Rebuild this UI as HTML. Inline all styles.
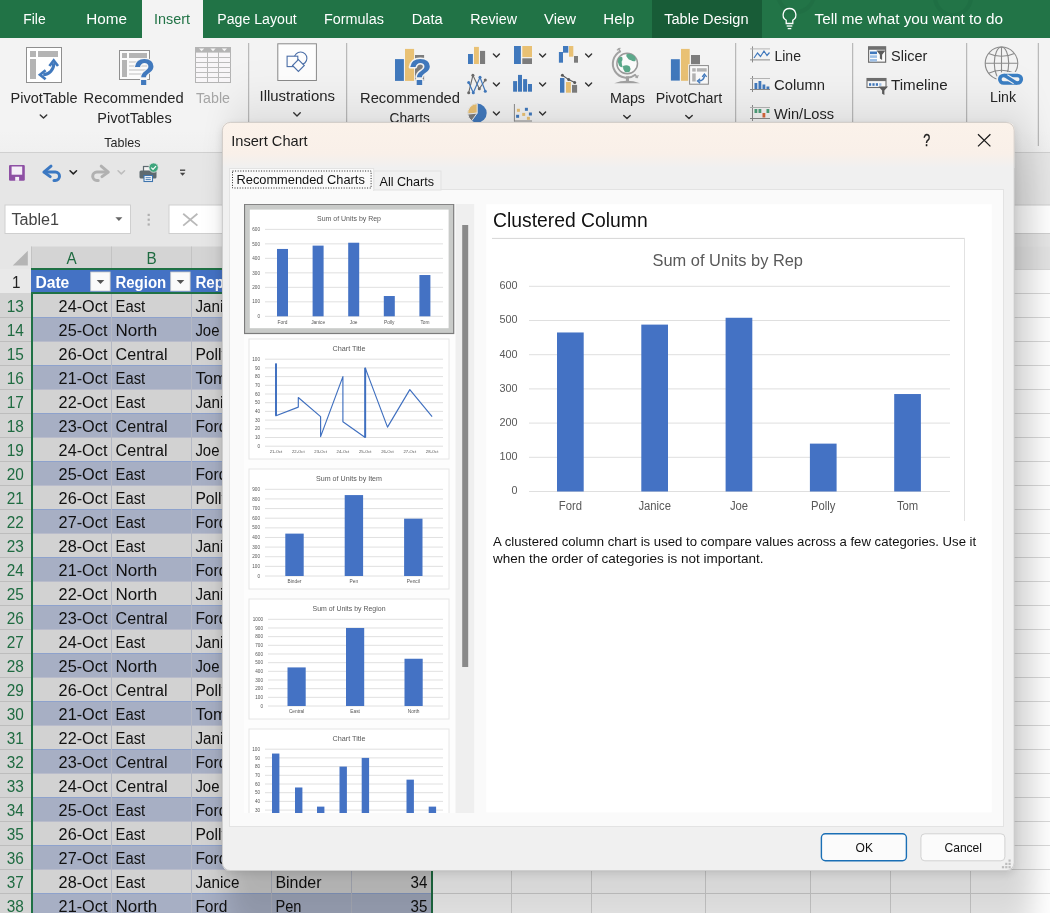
<!DOCTYPE html>
<html><head><meta charset="utf-8"><title>Insert Chart</title>
<style>
html,body{margin:0;padding:0;background:#e6e6e6;overflow:hidden}
svg{display:block;opacity:0.999}
text{font-family:"Liberation Sans",sans-serif;white-space:pre}
</style></head><body>
<svg width="1050" height="913" viewBox="0 0 1050 913">
<defs>
<linearGradient id="ribg" x1="0" y1="0" x2="0" y2="1"><stop offset="0" stop-color="#f3f3f3"/><stop offset="0.8" stop-color="#f3f3f3"/><stop offset="1" stop-color="#f0f0f0"/></linearGradient>
<linearGradient id="dlgtitle" x1="0" y1="0" x2="0" y2="1"><stop offset="0" stop-color="#fbf2ea"/><stop offset="0.68" stop-color="#f9f0e9"/><stop offset="1" stop-color="#f0f0f0"/></linearGradient>
<filter id="shadow" x="-30%" y="-30%" width="160%" height="160%"><feGaussianBlur stdDeviation="14 36"/></filter>
<filter id="shadow2" x="-10%" y="-10%" width="120%" height="120%"><feGaussianBlur stdDeviation="4"/></filter>
<clipPath id="dlgclip"><rect x="222" y="122" width="792.6" height="749" rx="8" ry="8"/></clipPath>
<clipPath id="listclip"><rect x="244" y="204" width="211" height="609"/></clipPath>
</defs>
<rect x="0" y="0" width="1050" height="38" fill="#217346" />
<rect x="652" y="0" width="110" height="38" fill="#185c37" />
<rect x="762" y="0" width="288" height="38" fill="#227447" />
<circle cx="796" cy="-6" r="18" fill="none" stroke="#1d6a40" stroke-width="4" opacity="0.4"/>
<circle cx="953" cy="-3" r="18" fill="none" stroke="#1d6a40" stroke-width="4" opacity="0.45"/>
<rect x="142" y="0" width="61" height="38" fill="#f3f3f3" />
<text x="23.3" y="24.3" font-size="15.5" fill="#ffffff" textLength="22.4" lengthAdjust="spacingAndGlyphs" >File</text>
<text x="86.3" y="24.3" font-size="15.5" fill="#ffffff" textLength="40.7" lengthAdjust="spacingAndGlyphs" >Home</text>
<text x="154.0" y="24.3" font-size="15.5" fill="#217346" textLength="36.0" lengthAdjust="spacingAndGlyphs" >Insert</text>
<text x="217.3" y="24.3" font-size="15.5" fill="#ffffff" textLength="79.4" lengthAdjust="spacingAndGlyphs" >Page Layout</text>
<text x="324.0" y="24.3" font-size="15.5" fill="#ffffff" textLength="60.0" lengthAdjust="spacingAndGlyphs" >Formulas</text>
<text x="411.7" y="24.3" font-size="15.5" fill="#ffffff" textLength="31.0" lengthAdjust="spacingAndGlyphs" >Data</text>
<text x="470.3" y="24.3" font-size="15.5" fill="#ffffff" textLength="46.7" lengthAdjust="spacingAndGlyphs" >Review</text>
<text x="544.0" y="24.3" font-size="15.5" fill="#ffffff" textLength="32.0" lengthAdjust="spacingAndGlyphs" >View</text>
<text x="603.3" y="24.3" font-size="15.5" fill="#ffffff" textLength="31.0" lengthAdjust="spacingAndGlyphs" >Help</text>
<text x="664.2" y="24.3" font-size="15.5" fill="#ffffff" textLength="84.3" lengthAdjust="spacingAndGlyphs" >Table Design</text>
<text x="814.5" y="24.3" font-size="15.5" fill="#ffffff" textLength="188.5" lengthAdjust="spacingAndGlyphs" >Tell me what you want to do</text>
<path d="M789.5 8.5 a6.3 6.3 0 0 1 3.3 11.7 v3.3 h-6.6 v-3.3 a6.3 6.3 0 0 1 3.3 -11.7 z" fill="none" stroke="#fff" stroke-width="1.3" />
<line x1="786.7" y1="26" x2="792.3" y2="26" stroke="#fff" stroke-width="1.3" />
<line x1="787.7" y1="28.6" x2="791.3" y2="28.6" stroke="#fff" stroke-width="1.3" />
<rect x="0" y="38" width="1050" height="115" fill="url(#ribg)" />
<line x1="0" y1="152.5" x2="1050" y2="152.5" stroke="#d0d0d0" stroke-width="1" />
<rect x="0" y="153" width="1050" height="94" fill="#e6e6e6" />
<line x1="248.7" y1="43" x2="248.7" y2="146" stroke="#acacac" stroke-width="1" />
<line x1="346.7" y1="43" x2="346.7" y2="146" stroke="#acacac" stroke-width="1" />
<line x1="735.7" y1="43" x2="735.7" y2="146" stroke="#acacac" stroke-width="1" />
<line x1="852.7" y1="43" x2="852.7" y2="146" stroke="#acacac" stroke-width="1" />
<line x1="966.7" y1="43" x2="966.7" y2="146" stroke="#acacac" stroke-width="1" />
<line x1="1038.3" y1="43" x2="1038.3" y2="146" stroke="#acacac" stroke-width="1" />
<rect x="26.5" y="47.5" width="35" height="35" fill="#ffffff" stroke="#8f8f8f" stroke-width="1"/>
<rect x="30" y="51" width="6" height="6" fill="#b4b4b4" />
<rect x="38" y="51" width="20" height="6" fill="#b4b4b4" />
<rect x="30" y="59" width="6" height="20" fill="#b4b4b4" />
<path d="M43.2 74.7 A10.8 10.8 0 0 0 53.7 63.2" fill="none" stroke="#4179bd" stroke-width="3.1" />
<path d="M49.4 66 L53.7 60.4 L58 66" fill="none" stroke="#4179bd" stroke-width="2.7" />
<path d="M45.6 70.2 L40 74.7 L45.6 79.2" fill="none" stroke="#4179bd" stroke-width="2.7" />
<text x="10.5" y="103.0" font-size="15.5" fill="#262626" textLength="67.0" lengthAdjust="spacingAndGlyphs" >PivotTable</text>
<path d="M40.25 114.9 L43.5 118.1 L46.75 114.9" fill="none" stroke="#333" stroke-width="1.4" stroke-linecap="round" stroke-linejoin="round"/>
<rect x="119.5" y="50.5" width="30" height="29" fill="#fbfbfb" stroke="#8f8f8f" stroke-width="1"/>
<rect x="122" y="53" width="5" height="5" fill="#b4b4b4" />
<rect x="129" y="53" width="18" height="5" fill="#b4b4b4" />
<rect x="122" y="60" width="5" height="17" fill="#b4b4b4" />
<line x1="129" y1="62" x2="147" y2="62" stroke="#c9c9c9" stroke-width="1.2" />
<line x1="129" y1="66" x2="147" y2="66" stroke="#c9c9c9" stroke-width="1.2" />
<line x1="129" y1="70" x2="147" y2="70" stroke="#c9c9c9" stroke-width="1.2" />
<line x1="129" y1="74" x2="147" y2="74" stroke="#c9c9c9" stroke-width="1.2" />
<text x="133.2" y="84.7" font-size="37" fill="#f3f3f3" font-weight="700" textLength="22.3" lengthAdjust="spacingAndGlyphs" stroke="#f3f3f3" stroke-width="2">?</text>
<text x="133.2" y="84.7" font-size="37" fill="#4179bd" font-weight="700" textLength="22.3" lengthAdjust="spacingAndGlyphs" >?</text>
<text x="83.6" y="103.0" font-size="15.5" fill="#262626" textLength="100.0" lengthAdjust="spacingAndGlyphs" >Recommended</text>
<text x="97.3" y="123.0" font-size="15.5" fill="#262626" textLength="74.4" lengthAdjust="spacingAndGlyphs" >PivotTables</text>
<rect x="195.5" y="47.5" width="35" height="35" fill="#f8f6f8" stroke="#b4b4b4" stroke-width="1"/>
<rect x="195" y="47" width="36" height="5.6" fill="#b4b4b4" />
<path d="M199.0 48.4 h5.2 l-2.6 2.9 z" fill="#f6f6f6" stroke="none" stroke-width="1" />
<path d="M210.4 48.4 h5.2 l-2.6 2.9 z" fill="#f6f6f6" stroke="none" stroke-width="1" />
<path d="M221.8 48.4 h5.2 l-2.6 2.9 z" fill="#f6f6f6" stroke="none" stroke-width="1" />
<line x1="207.5" y1="52" x2="207.5" y2="82.5" stroke="#b9b9b9" stroke-width="1" />
<line x1="218.5" y1="52" x2="218.5" y2="82.5" stroke="#b9b9b9" stroke-width="1" />
<line x1="195.5" y1="57.5" x2="230.5" y2="57.5" stroke="#bcbcbc" stroke-width="1" />
<line x1="195.5" y1="62.5" x2="230.5" y2="62.5" stroke="#bcbcbc" stroke-width="1" />
<line x1="195.5" y1="67.5" x2="230.5" y2="67.5" stroke="#bcbcbc" stroke-width="1" />
<line x1="195.5" y1="72.5" x2="230.5" y2="72.5" stroke="#bcbcbc" stroke-width="1" />
<line x1="195.5" y1="77.5" x2="230.5" y2="77.5" stroke="#bcbcbc" stroke-width="1" />
<text x="196.0" y="103.0" font-size="15.5" fill="#a6a6a6" textLength="34.0" lengthAdjust="spacingAndGlyphs" >Table</text>
<text x="104.3" y="146.7" font-size="13.5" fill="#262626" textLength="36.2" lengthAdjust="spacingAndGlyphs" >Tables</text>
<rect x="277.8" y="43.8" width="38.6" height="36.7" fill="#fdfdfd" stroke="#8a8a8a" stroke-width="1"/>
<circle cx="300.6" cy="58.3" r="6.3" fill="none" stroke="#4c6fa8" stroke-width="1.1"/>
<rect x="287.1" y="56.2" width="10.7" height="10.4" fill="#fdfdfd" stroke="#4c6fa8" stroke-width="1.1"/>
<path d="M298.4 59.6 l5.9 5.9 l-5.9 5.9 l-5.9 -5.9 z" fill="#fdfdfd" stroke="#4c6fa8" stroke-width="1.1" />
<text x="259.5" y="101.0" font-size="15.5" fill="#262626" textLength="75.5" lengthAdjust="spacingAndGlyphs" >Illustrations</text>
<path d="M293.75 112.7 L297 115.9 L300.25 112.7" fill="none" stroke="#333" stroke-width="1.4" stroke-linecap="round" stroke-linejoin="round"/>
<rect x="395" y="59.1" width="8.9" height="21.8" fill="#4179bd" />
<rect x="405" y="48.9" width="9.1" height="32" fill="#e9c174" />
<rect x="415" y="55" width="9.1" height="25.9" fill="#7d7d7d" />
<text x="408.6" y="84.9" font-size="37" fill="#f3f3f3" font-weight="700" textLength="23.5" lengthAdjust="spacingAndGlyphs" stroke="#f3f3f3" stroke-width="3" stroke-linejoin="round">?</text>
<text x="408.6" y="84.9" font-size="37" fill="#4179bd" font-weight="700" textLength="23.5" lengthAdjust="spacingAndGlyphs" >?</text>
<text x="360.0" y="103.0" font-size="15.5" fill="#262626" textLength="100.0" lengthAdjust="spacingAndGlyphs" >Recommended</text>
<text x="389.5" y="123.0" font-size="15.5" fill="#262626" textLength="40.5" lengthAdjust="spacingAndGlyphs" >Charts</text>
<rect x="468" y="54" width="4.9" height="10" fill="#4179bd" />
<rect x="474" y="46.9" width="4.9" height="17.1" fill="#e9c174" />
<rect x="480" y="50.9" width="5.1" height="13.1" fill="#7d7d7d" />
<path d="M493.4 54.1 L496.4 57.1 L499.4 54.1" fill="none" stroke="#333" stroke-width="1.4" stroke-linecap="round" stroke-linejoin="round"/>
<path d="M468.7 92.7 L472.9 75.3 L479.3 88.7 L485.3 80" fill="none" stroke="#6a6a6a" stroke-width="1.1" />
<path d="M468.7 82.4 L473.3 92.7 L480 77.3 L485.3 91.3" fill="none" stroke="#4179bd" stroke-width="1.2" />
<circle cx="468.7" cy="92.7" r="1.5" fill="#6a6a6a"/>
<circle cx="472.9" cy="75.3" r="1.5" fill="#6a6a6a"/>
<circle cx="479.3" cy="88.7" r="1.5" fill="#6a6a6a"/>
<circle cx="485.3" cy="80" r="1.5" fill="#6a6a6a"/>
<circle cx="468.7" cy="82.4" r="1.5" fill="#4179bd"/>
<circle cx="473.3" cy="92.7" r="1.5" fill="#4179bd"/>
<circle cx="480" cy="77.3" r="1.5" fill="#4179bd"/>
<circle cx="485.3" cy="91.3" r="1.5" fill="#4179bd"/>
<path d="M493.4 83 L496.4 86 L499.4 83" fill="none" stroke="#333" stroke-width="1.4" stroke-linecap="round" stroke-linejoin="round"/>
<circle cx="477.2" cy="113.1" r="9.5" fill="#4179bd"/>
<path d="M477.2 113.1 L477.2 103.6 A9.5 9.5 0 0 0 467.7 114.1 z" fill="#e9c174" stroke="#f3f3f3" stroke-width="1" />
<path d="M477.2 113.1 L467.7 114.1 A9.5 9.5 0 0 0 471.7 120.8 z" fill="#7d7d7d" stroke="#f3f3f3" stroke-width="1" />
<path d="M493.4 111.9 L496.4 114.9 L499.4 111.9" fill="none" stroke="#333" stroke-width="1.4" stroke-linecap="round" stroke-linejoin="round"/>
<rect x="514" y="46" width="6.9" height="18" fill="#4179bd" />
<rect x="522.3" y="46" width="9.7" height="11.1" fill="#e9c174" />
<rect x="522.3" y="58.3" width="9.7" height="5.7" fill="#7d7d7d" />
<path d="M539.6 54.1 L542.6 57.1 L545.6 54.1" fill="none" stroke="#333" stroke-width="1.4" stroke-linecap="round" stroke-linejoin="round"/>
<rect x="513.1" y="81.1" width="4" height="10.6" fill="#4179bd" />
<rect x="518" y="74.9" width="4" height="16.8" fill="#4179bd" />
<rect x="523.1" y="79.1" width="4" height="12.6" fill="#4179bd" />
<rect x="528" y="84" width="4" height="7.7" fill="#4179bd" />
<path d="M539.6 83 L542.6 86 L545.6 83" fill="none" stroke="#333" stroke-width="1.4" stroke-linecap="round" stroke-linejoin="round"/>
<line x1="514.4" y1="104" x2="514.4" y2="121.4" stroke="#8a8a8a" stroke-width="1" />
<line x1="514" y1="121" x2="532" y2="121" stroke="#8a8a8a" stroke-width="1" />
<rect x="516.9" y="108.8" width="3" height="3" fill="#e9c174" />
<rect x="524.9" y="107.8" width="3" height="3" fill="#4179bd" />
<rect x="522.2" y="112.9" width="3" height="3" fill="#e9c174" />
<rect x="528.9" y="112.5" width="3" height="3" fill="#4179bd" />
<rect x="516.1" y="114.8" width="3" height="3" fill="#4179bd" />
<rect x="526.9" y="116.8" width="3" height="3" fill="#e9c174" />
<path d="M539.6 111.9 L542.6 114.9 L545.6 111.9" fill="none" stroke="#333" stroke-width="1.4" stroke-linecap="round" stroke-linejoin="round"/>
<rect x="558.9" y="52" width="4.1" height="10.7" fill="#4179bd" />
<rect x="563" y="46" width="5.3" height="6.7" fill="#4179bd" />
<rect x="569" y="46" width="4.3" height="10.7" fill="#e9c174" />
<rect x="574" y="56" width="4" height="6.7" fill="#7d7d7d" />
<path d="M585.6 54.1 L588.6 57.1 L591.6 54.1" fill="none" stroke="#333" stroke-width="1.4" stroke-linecap="round" stroke-linejoin="round"/>
<rect x="560" y="78" width="4.4" height="14.7" fill="#4179bd" />
<rect x="566" y="82" width="4.9" height="10.7" fill="#e9c174" />
<rect x="572" y="84.9" width="5.1" height="7.8" fill="#7d7d7d" />
<path d="M562.4 75.3 L568.7 79.6 L574.7 82.4" fill="none" stroke="#5a5a5a" stroke-width="1.1" />
<circle cx="562.4" cy="75.3" r="1.5" fill="#5a5a5a"/>
<circle cx="568.7" cy="79.6" r="1.5" fill="#5a5a5a"/>
<circle cx="574.7" cy="82.4" r="1.5" fill="#5a5a5a"/>
<path d="M585.6 83 L588.6 86 L591.6 83" fill="none" stroke="#333" stroke-width="1.4" stroke-linecap="round" stroke-linejoin="round"/>
<path d="M614.2 83.2 Q627 78.4 639.9 83.2 z" fill="#a2a2a2" stroke="none" stroke-width="1" />
<rect x="625.9" y="76.3" width="3.1" height="5.2" fill="#a2a2a2" />
<path d="M620.2 51.4 A14 14 0 1 0 635.4 74.8" fill="none" stroke="#a2a2a2" stroke-width="2" />
<line x1="618.2" y1="48.4" x2="620.6" y2="52" stroke="#a2a2a2" stroke-width="1.5" />
<line x1="616.9" y1="50.2" x2="620.4" y2="48" stroke="#a2a2a2" stroke-width="1.2" />
<line x1="634.8" y1="74.2" x2="637.6" y2="78" stroke="#a2a2a2" stroke-width="1.5" />
<line x1="635.4" y1="77.6" x2="638.6" y2="75.4" stroke="#a2a2a2" stroke-width="1.2" />
<circle cx="627.2" cy="63.5" r="10.3" fill="#fbfbfb" stroke="#9a9a9a" stroke-width="1.5"/>
<path d="M618.2 58.6 q2.6 -2.8 4.2 -1.2 q0.6 2.6 -0.8 4.4 q0.2 3.2 1.2 5.4 q-2.2 0.6 -3.8 -1.6 q-1.8 -3.4 -0.8 -7 z" fill="#5ba88a" stroke="none" stroke-width="1" />
<path d="M626.4 54.2 q4.8 -1.6 8.6 2.4 q1.4 2.4 0.4 4.4 q-2.6 0.6 -4.4 -0.8 q-2.6 -0.2 -3.6 -2.4 q-1.6 -1.6 -1 -3.6 z" fill="#5ba88a" stroke="none" stroke-width="1" />
<path d="M623 66 q3.6 -1.4 6.6 0.2 q1.8 2.6 0.2 5.2 q-2.6 1.6 -5 0.4 q-2.2 -2.4 -1.8 -5.8 z" fill="#5ba88a" stroke="none" stroke-width="1" />
<text x="610.0" y="103.0" font-size="15.5" fill="#262626" textLength="35.0" lengthAdjust="spacingAndGlyphs" >Maps</text>
<path d="M623.75 115.4 L627 118.6 L630.25 115.4" fill="none" stroke="#333" stroke-width="1.4" stroke-linecap="round" stroke-linejoin="round"/>
<rect x="670.9" y="59.2" width="8.9" height="21.4" fill="#4179bd" />
<rect x="681" y="48.9" width="8.7" height="31.9" fill="#e9c174" />
<rect x="691" y="55" width="9" height="12" fill="#7d7d7d" />
<rect x="688.2" y="64.2" width="21.6" height="21.4" fill="#f3f3f3" />
<rect x="689.6" y="65.6" width="18.8" height="18.6" fill="#fbfbfb" stroke="#8a8a8a" stroke-width="1"/>
<rect x="692.2" y="68.2" width="3.5" height="3.4" fill="#b4b4b4" />
<rect x="696.9" y="68.2" width="9.8" height="3.4" fill="#b4b4b4" />
<rect x="692.2" y="73.4" width="3.5" height="8.1" fill="#b4b4b4" />
<path d="M699 81 A5.4 5.4 0 0 0 704.4 75.6" fill="none" stroke="#4179bd" stroke-width="1.5" />
<path d="M702.2 76.9 L704.4 74 L706.6 76.9" fill="none" stroke="#4179bd" stroke-width="1.3" />
<path d="M700.2 78.8 L697.5 81 L700.2 83.2" fill="none" stroke="#4179bd" stroke-width="1.3" />
<text x="655.7" y="103.0" font-size="15.5" fill="#262626" textLength="66.5" lengthAdjust="spacingAndGlyphs" >PivotChart</text>
<path d="M685.75 115.4 L689 118.6 L692.25 115.4" fill="none" stroke="#333" stroke-width="1.4" stroke-linecap="round" stroke-linejoin="round"/>
<line x1="752.5" y1="46.4" x2="752.5" y2="62.4" stroke="#8a8a8a" stroke-width="1" />
<line x1="750" y1="59.9" x2="770" y2="59.9" stroke="#8a8a8a" stroke-width="1" />
<line x1="750" y1="48.9" x2="770" y2="48.9" stroke="#b5b5b5" stroke-width="1" />
<path d="M754 58 l3.5 -5 l3 3.5 l3.5 -5.5 l3 4.5 l2.5 -3" fill="none" stroke="#4179bd" stroke-width="1.2" />
<text x="774.4" y="61.3" font-size="15.5" fill="#262626" textLength="26.6" lengthAdjust="spacingAndGlyphs" >Line</text>
<line x1="752.5" y1="76" x2="752.5" y2="92" stroke="#8a8a8a" stroke-width="1" />
<line x1="750" y1="89.5" x2="770" y2="89.5" stroke="#8a8a8a" stroke-width="1" />
<line x1="750" y1="78.5" x2="770" y2="78.5" stroke="#b5b5b5" stroke-width="1" />
<rect x="754.5" y="83" width="2.8" height="6" fill="#4179bd" />
<rect x="758.5" y="81" width="2.8" height="8" fill="#4179bd" />
<rect x="762.5" y="84.5" width="2.8" height="4.5" fill="#4179bd" />
<rect x="766.5" y="86.5" width="2.8" height="2.5" fill="#4179bd" />
<text x="774.0" y="90.3" font-size="15.5" fill="#262626" textLength="51.0" lengthAdjust="spacingAndGlyphs" >Column</text>
<line x1="752.5" y1="105" x2="752.5" y2="121" stroke="#8a8a8a" stroke-width="1" />
<line x1="750" y1="118.5" x2="770" y2="118.5" stroke="#8a8a8a" stroke-width="1" />
<line x1="750" y1="107.5" x2="770" y2="107.5" stroke="#b5b5b5" stroke-width="1" />
<rect x="754.5" y="109" width="2.8" height="4" fill="#4fa07a" />
<rect x="758.5" y="109" width="2.8" height="4" fill="#4fa07a" />
<rect x="762.5" y="113" width="2.8" height="4.5" fill="#d9663a" />
<rect x="766.5" y="109" width="2.8" height="4" fill="#4fa07a" />
<text x="774.0" y="119.0" font-size="15.5" fill="#262626" textLength="60.0" lengthAdjust="spacingAndGlyphs" >Win/Loss</text>
<rect x="868.6" y="46.8" width="17" height="15.4" fill="#fbfbfb" stroke="#6f6f6f" stroke-width="1.2"/>
<rect x="868.6" y="46.8" width="17" height="3" fill="#6f6f6f" />
<rect x="870" y="51.5" width="7" height="2.6" fill="#4179bd" />
<rect x="870" y="55.3" width="7" height="2.6" fill="#9fc0e6" />
<rect x="870" y="59" width="7" height="2.6" fill="#9fc0e6" />
<path d="M876.5 50.5 h9 l-3.4 4.2 v5.2 l-2.2 -1.4 v-3.8 z" fill="#5c5c5c" stroke="none" stroke-width="1" />
<text x="891.0" y="61.3" font-size="15.5" fill="#262626" textLength="36.3" lengthAdjust="spacingAndGlyphs" >Slicer</text>
<rect x="867" y="78.5" width="19" height="9" fill="#fbfbfb" stroke="#6f6f6f" stroke-width="1.1"/>
<rect x="867" y="78.5" width="19" height="2.6" fill="#6f6f6f" />
<rect x="869" y="83.2" width="2.2" height="2.6" fill="#4179bd" />
<rect x="872.4" y="83.2" width="2.2" height="2.6" fill="#4179bd" />
<rect x="875.8" y="83.2" width="2.2" height="2.6" fill="#4179bd" />
<rect x="879.2" y="83.2" width="2.2" height="2.6" fill="#9fc0e6" />
<path d="M878.5 86.5 h9.5 l-3.6 4 v4.5 l-2.3 -1.2 v-3.3 z" fill="#5c5c5c" stroke="none" stroke-width="1" />
<text x="891.0" y="90.3" font-size="15.5" fill="#262626" textLength="56.7" lengthAdjust="spacingAndGlyphs" >Timeline</text>
<g fill="none" stroke="#8b8b8b" stroke-width="1.1"><circle cx="1001.5" cy="63.3" r="16.3"/><ellipse cx="1001.5" cy="63.3" rx="7.2" ry="16.3"/><line x1="1001.5" y1="47" x2="1001.5" y2="79.6"/><line x1="985.2" y1="63.3" x2="1017.8" y2="63.3"/><path d="M988.6 53.4 Q1001.5 59.2 1014.4 53.4 M988.6 73.2 Q1001.5 67.4 1014.4 73.2"/></g>
<rect x="996.4" y="72.1" width="28.3" height="14.3" rx="7.1" fill="#f3f3f3"/>
<rect x="999.8" y="75.5" width="21.5" height="7.5" rx="3.75" fill="none" stroke="#3b7fc4" stroke-width="3.6"/>
<path d="M1006.2 76.6 L1014.8 81.9" fill="none" stroke="#f3f3f3" stroke-width="5.6" />
<path d="M1004.8 75.6 L1016.2 82.9" fill="none" stroke="#3b7fc4" stroke-width="3.4" stroke-linecap="round"/>
<text x="990.0" y="102.3" font-size="15.5" fill="#262626" textLength="26.0" lengthAdjust="spacingAndGlyphs" >Link</text>
<rect x="9" y="164.9" width="15.8" height="15.8" fill="#8e50a4" rx="1.2"/>
<rect x="11.6" y="166.5" width="10.6" height="8.2" fill="#f4eef7" />
<rect x="15.2" y="176.9" width="3.9" height="3.9" fill="#f4eef7" />
<path d="M51 166.2 L43.9 172.1 L50.2 176.6" fill="none" stroke="#3b78c2" stroke-width="3" stroke-linecap="round" stroke-linejoin="round"/>
<path d="M45 172.1 H55.3 a4.2 4.2 0 0 1 0 8.4 h-1.3" fill="none" stroke="#3b78c2" stroke-width="3" stroke-linecap="round"/>
<path d="M70.05 170.7 L73.3 173.9 L76.55 170.7" fill="none" stroke="#222" stroke-width="1.5" stroke-linecap="round" stroke-linejoin="round"/>
<path d="M101.2 166.2 L108.3 172.1 L102 176.6" fill="none" stroke="#b1b1b1" stroke-width="3" stroke-linecap="round" stroke-linejoin="round"/>
<path d="M107.2 172.1 H96.9 a4.2 4.2 0 0 0 0 8.4 h1.3" fill="none" stroke="#b1b1b1" stroke-width="3" stroke-linecap="round"/>
<path d="M118.05 170.7 L121.3 173.9 L124.55 170.7" fill="none" stroke="#bdbdbd" stroke-width="1.5" stroke-linecap="round" stroke-linejoin="round"/>
<rect x="143.5" y="166.5" width="9" height="5" fill="#f2f2f2" stroke="#5e6a70" stroke-width="1.2"/>
<rect x="139.5" y="170.5" width="17" height="8" fill="#5e6a70" rx="1.5"/>
<rect x="144" y="175.5" width="8.5" height="6" fill="#f4f8fb" stroke="#3e74ad" stroke-width="1.1"/>
<line x1="145.6" y1="177.7" x2="150.8" y2="177.7" stroke="#3e74ad" stroke-width="0.9" />
<line x1="145.6" y1="179.6" x2="150.8" y2="179.6" stroke="#3e74ad" stroke-width="0.9" />
<circle cx="153.6" cy="167.6" r="4.7" fill="#3fa57d" stroke="#e6e6e6" stroke-width="0.8"/>
<path d="M151.3 167.7 l1.7 1.7 l3 -3.3" fill="none" stroke="#fff" stroke-width="1.2" />
<line x1="180" y1="170.2" x2="185.2" y2="170.2" stroke="#444" stroke-width="1.4" />
<path d="M179.9 172.8 h5.4 l-2.7 3 z" fill="#444" stroke="none" stroke-width="1" />
<rect x="5" y="205" width="125.5" height="28.5" fill="#ffffff" stroke="#cfcfcf" stroke-width="1"/>
<text x="11.4" y="224.6" font-size="16" fill="#444" textLength="47.6" lengthAdjust="spacingAndGlyphs" >Table1</text>
<path d="M115.4 217.3 h7 l-3.5 3.6 z" fill="#666" stroke="none" stroke-width="1" />
<rect x="147.6" y="213.8" width="2.2" height="2.2" fill="#b0b0b0" />
<rect x="147.6" y="218.6" width="2.2" height="2.2" fill="#b0b0b0" />
<rect x="147.6" y="223.4" width="2.2" height="2.2" fill="#b0b0b0" />
<rect x="169" y="205" width="883" height="28.5" fill="#ffffff" stroke="#cfcfcf" stroke-width="1"/>
<path d="M183.2 213.8 L197.4 225.6 M197.4 213.8 L183.2 225.6" fill="none" stroke="#b9b9b9" stroke-width="1.8" />
<rect x="0" y="246.5" width="1050" height="22.5" fill="#e6e6e6" />
<rect x="31" y="246.5" width="400" height="22.5" fill="#d4d4d4" />
<rect x="431" y="246.5" width="619" height="22.5" fill="#e3e3e3" />
<line x1="31.5" y1="246.5" x2="31.5" y2="269" stroke="#c3c3c3" stroke-width="1" />
<line x1="111.5" y1="246.5" x2="111.5" y2="269" stroke="#c3c3c3" stroke-width="1" />
<line x1="191.5" y1="246.5" x2="191.5" y2="269" stroke="#c3c3c3" stroke-width="1" />
<line x1="271.5" y1="246.5" x2="271.5" y2="269" stroke="#c3c3c3" stroke-width="1" />
<line x1="351.5" y1="246.5" x2="351.5" y2="269" stroke="#c3c3c3" stroke-width="1" />
<line x1="431.5" y1="246.5" x2="431.5" y2="269" stroke="#c3c3c3" stroke-width="1" />
<line x1="511.5" y1="246.5" x2="511.5" y2="269" stroke="#c3c3c3" stroke-width="1" />
<line x1="591.5" y1="246.5" x2="591.5" y2="269" stroke="#c3c3c3" stroke-width="1" />
<line x1="705.5" y1="246.5" x2="705.5" y2="269" stroke="#c3c3c3" stroke-width="1" />
<line x1="810.5" y1="246.5" x2="810.5" y2="269" stroke="#c3c3c3" stroke-width="1" />
<line x1="890.5" y1="246.5" x2="890.5" y2="269" stroke="#c3c3c3" stroke-width="1" />
<line x1="970.5" y1="246.5" x2="970.5" y2="269" stroke="#c3c3c3" stroke-width="1" />
<path d="M12.8 265.6 H27.8 V250.8 z" fill="#b5b5b5" stroke="none" stroke-width="1" />
<text x="66.5" y="264.4" font-size="16.5" fill="#1f6b41" textLength="10.2" lengthAdjust="spacingAndGlyphs" >A</text>
<text x="146.5" y="264.4" font-size="16.5" fill="#1f6b41" textLength="10.2" lengthAdjust="spacingAndGlyphs" >B</text>
<text x="226.1" y="264.4" font-size="16.5" fill="#1f6b41" textLength="11.1" lengthAdjust="spacingAndGlyphs" >C</text>
<text x="306.1" y="264.4" font-size="16.5" fill="#1f6b41" textLength="11.1" lengthAdjust="spacingAndGlyphs" >D</text>
<text x="386.5" y="264.4" font-size="16.5" fill="#1f6b41" textLength="10.2" lengthAdjust="spacingAndGlyphs" >E</text>
<rect x="0" y="269" width="1050" height="644" fill="#ffffff" />
<line x1="431" y1="269.5" x2="1050" y2="269.5" stroke="#d9d9d9" stroke-width="1" />
<line x1="431" y1="293.5" x2="1050" y2="293.5" stroke="#d9d9d9" stroke-width="1" />
<line x1="431" y1="317.5" x2="1050" y2="317.5" stroke="#d9d9d9" stroke-width="1" />
<line x1="431" y1="341.5" x2="1050" y2="341.5" stroke="#d9d9d9" stroke-width="1" />
<line x1="431" y1="365.5" x2="1050" y2="365.5" stroke="#d9d9d9" stroke-width="1" />
<line x1="431" y1="389.5" x2="1050" y2="389.5" stroke="#d9d9d9" stroke-width="1" />
<line x1="431" y1="413.5" x2="1050" y2="413.5" stroke="#d9d9d9" stroke-width="1" />
<line x1="431" y1="437.5" x2="1050" y2="437.5" stroke="#d9d9d9" stroke-width="1" />
<line x1="431" y1="461.5" x2="1050" y2="461.5" stroke="#d9d9d9" stroke-width="1" />
<line x1="431" y1="485.5" x2="1050" y2="485.5" stroke="#d9d9d9" stroke-width="1" />
<line x1="431" y1="509.5" x2="1050" y2="509.5" stroke="#d9d9d9" stroke-width="1" />
<line x1="431" y1="533.5" x2="1050" y2="533.5" stroke="#d9d9d9" stroke-width="1" />
<line x1="431" y1="557.5" x2="1050" y2="557.5" stroke="#d9d9d9" stroke-width="1" />
<line x1="431" y1="581.5" x2="1050" y2="581.5" stroke="#d9d9d9" stroke-width="1" />
<line x1="431" y1="605.5" x2="1050" y2="605.5" stroke="#d9d9d9" stroke-width="1" />
<line x1="431" y1="629.5" x2="1050" y2="629.5" stroke="#d9d9d9" stroke-width="1" />
<line x1="431" y1="653.5" x2="1050" y2="653.5" stroke="#d9d9d9" stroke-width="1" />
<line x1="431" y1="677.5" x2="1050" y2="677.5" stroke="#d9d9d9" stroke-width="1" />
<line x1="431" y1="701.5" x2="1050" y2="701.5" stroke="#d9d9d9" stroke-width="1" />
<line x1="431" y1="725.5" x2="1050" y2="725.5" stroke="#d9d9d9" stroke-width="1" />
<line x1="431" y1="749.5" x2="1050" y2="749.5" stroke="#d9d9d9" stroke-width="1" />
<line x1="431" y1="773.5" x2="1050" y2="773.5" stroke="#d9d9d9" stroke-width="1" />
<line x1="431" y1="797.5" x2="1050" y2="797.5" stroke="#d9d9d9" stroke-width="1" />
<line x1="431" y1="821.5" x2="1050" y2="821.5" stroke="#d9d9d9" stroke-width="1" />
<line x1="431" y1="845.5" x2="1050" y2="845.5" stroke="#d9d9d9" stroke-width="1" />
<line x1="431" y1="869.5" x2="1050" y2="869.5" stroke="#d9d9d9" stroke-width="1" />
<line x1="431" y1="893.5" x2="1050" y2="893.5" stroke="#d9d9d9" stroke-width="1" />
<line x1="431" y1="917.5" x2="1050" y2="917.5" stroke="#d9d9d9" stroke-width="1" />
<line x1="431.5" y1="269" x2="431.5" y2="913" stroke="#d9d9d9" stroke-width="1" />
<line x1="511.5" y1="269" x2="511.5" y2="913" stroke="#d9d9d9" stroke-width="1" />
<line x1="591.5" y1="269" x2="591.5" y2="913" stroke="#d9d9d9" stroke-width="1" />
<line x1="705.5" y1="269" x2="705.5" y2="913" stroke="#d9d9d9" stroke-width="1" />
<line x1="810.5" y1="269" x2="810.5" y2="913" stroke="#d9d9d9" stroke-width="1" />
<line x1="890.5" y1="269" x2="890.5" y2="913" stroke="#d9d9d9" stroke-width="1" />
<line x1="970.5" y1="269" x2="970.5" y2="913" stroke="#d9d9d9" stroke-width="1" />
<rect x="0" y="269" width="31" height="24" fill="#e9e9e9" />
<rect x="0" y="293" width="31" height="620" fill="#d4d4d4" />
<rect x="31" y="269" width="400" height="24" fill="#4472c4" />
<text x="35.4" y="288.4" font-size="16" fill="#ffffff" font-weight="700" textLength="33.9" lengthAdjust="spacingAndGlyphs" >Date</text>
<rect x="90.7" y="272" width="19.4" height="19" fill="#fafafa" stroke="#c9c9c9" stroke-width="0.8"/>
<path d="M96.7 280 h7.6 l-3.8 4 z" fill="#555" stroke="none" stroke-width="1" />
<text x="115.4" y="288.4" font-size="16" fill="#ffffff" font-weight="700" textLength="50.8" lengthAdjust="spacingAndGlyphs" >Region</text>
<rect x="170.7" y="272" width="19.4" height="19" fill="#fafafa" stroke="#c9c9c9" stroke-width="0.8"/>
<path d="M176.7 280 h7.6 l-3.8 4 z" fill="#555" stroke="none" stroke-width="1" />
<text x="195.4" y="288.4" font-size="16" fill="#ffffff" font-weight="700" textLength="28.6" lengthAdjust="spacingAndGlyphs" >Rep</text>
<rect x="250.7" y="272" width="19.4" height="19" fill="#fafafa" stroke="#c9c9c9" stroke-width="0.8"/>
<path d="M256.7 280 h7.6 l-3.8 4 z" fill="#555" stroke="none" stroke-width="1" />
<text x="275.4" y="288.4" font-size="16" fill="#ffffff" font-weight="700" textLength="30.6" lengthAdjust="spacingAndGlyphs" >Item</text>
<rect x="330.7" y="272" width="19.4" height="19" fill="#fafafa" stroke="#c9c9c9" stroke-width="0.8"/>
<path d="M336.7 280 h7.6 l-3.8 4 z" fill="#555" stroke="none" stroke-width="1" />
<text x="355.4" y="288.4" font-size="16" fill="#ffffff" font-weight="700" textLength="37.6" lengthAdjust="spacingAndGlyphs" >Units</text>
<rect x="410.7" y="272" width="19.4" height="19" fill="#fafafa" stroke="#c9c9c9" stroke-width="0.8"/>
<path d="M416.7 280 h7.6 l-3.8 4 z" fill="#555" stroke="none" stroke-width="1" />
<text x="11.9" y="288.0" font-size="16.5" fill="#222" textLength="8.5" lengthAdjust="spacingAndGlyphs" >1</text>
<rect x="31" y="293" width="400" height="24" fill="#d2d2d2" />
<rect x="31" y="317" width="400" height="24" fill="#a7afc4" />
<rect x="31" y="341" width="400" height="24" fill="#d2d2d2" />
<rect x="31" y="365" width="400" height="24" fill="#a7afc4" />
<rect x="31" y="389" width="400" height="24" fill="#d2d2d2" />
<rect x="31" y="413" width="400" height="24" fill="#a7afc4" />
<rect x="31" y="437" width="400" height="24" fill="#d2d2d2" />
<rect x="31" y="461" width="400" height="24" fill="#a7afc4" />
<rect x="31" y="485" width="400" height="24" fill="#d2d2d2" />
<rect x="31" y="509" width="400" height="24" fill="#a7afc4" />
<rect x="31" y="533" width="400" height="24" fill="#d2d2d2" />
<rect x="31" y="557" width="400" height="24" fill="#a7afc4" />
<rect x="31" y="581" width="400" height="24" fill="#d2d2d2" />
<rect x="31" y="605" width="400" height="24" fill="#a7afc4" />
<rect x="31" y="629" width="400" height="24" fill="#d2d2d2" />
<rect x="31" y="653" width="400" height="24" fill="#a7afc4" />
<rect x="31" y="677" width="400" height="24" fill="#d2d2d2" />
<rect x="31" y="701" width="400" height="24" fill="#a7afc4" />
<rect x="31" y="725" width="400" height="24" fill="#d2d2d2" />
<rect x="31" y="749" width="400" height="24" fill="#a7afc4" />
<rect x="31" y="773" width="400" height="24" fill="#d2d2d2" />
<rect x="31" y="797" width="400" height="24" fill="#a7afc4" />
<rect x="31" y="821" width="400" height="24" fill="#d2d2d2" />
<rect x="31" y="845" width="400" height="24" fill="#a7afc4" />
<rect x="31" y="869" width="400" height="24" fill="#d2d2d2" />
<rect x="31" y="893" width="400" height="24" fill="#a7afc4" />
<line x1="0" y1="317.5" x2="31" y2="317.5" stroke="#bdbdbd" stroke-width="1" />
<line x1="33" y1="317.5" x2="431" y2="317.5" stroke="#8ea2cc" stroke-width="1" />
<line x1="111.5" y1="293" x2="111.5" y2="317" stroke="#b4b8c4" stroke-width="1" />
<line x1="191.5" y1="293" x2="191.5" y2="317" stroke="#b4b8c4" stroke-width="1" />
<line x1="271.5" y1="293" x2="271.5" y2="317" stroke="#b4b8c4" stroke-width="1" />
<line x1="351.5" y1="293" x2="351.5" y2="317" stroke="#b4b8c4" stroke-width="1" />
<text x="6.8" y="312.4" font-size="16.5" fill="#1f6b41" textLength="17.1" lengthAdjust="spacingAndGlyphs" >13</text>
<text x="58.6" y="312.4" font-size="15.8" fill="#111" textLength="48.8" lengthAdjust="spacingAndGlyphs" >24-Oct</text>
<text x="115.6" y="312.4" font-size="15.8" fill="#111" textLength="29.6" lengthAdjust="spacingAndGlyphs" >East</text>
<text x="195.4" y="312.4" font-size="15.8" fill="#111" textLength="44.0" lengthAdjust="spacingAndGlyphs" >Janice</text>
<line x1="0" y1="341.5" x2="31" y2="341.5" stroke="#bdbdbd" stroke-width="1" />
<line x1="33" y1="341.5" x2="431" y2="341.5" stroke="#b9bccb" stroke-width="1" />
<line x1="111.5" y1="317" x2="111.5" y2="341" stroke="#b4b8c4" stroke-width="1" />
<line x1="191.5" y1="317" x2="191.5" y2="341" stroke="#b4b8c4" stroke-width="1" />
<line x1="271.5" y1="317" x2="271.5" y2="341" stroke="#b4b8c4" stroke-width="1" />
<line x1="351.5" y1="317" x2="351.5" y2="341" stroke="#b4b8c4" stroke-width="1" />
<text x="6.8" y="336.4" font-size="16.5" fill="#1f6b41" textLength="17.1" lengthAdjust="spacingAndGlyphs" >14</text>
<text x="58.6" y="336.4" font-size="15.8" fill="#111" textLength="48.8" lengthAdjust="spacingAndGlyphs" >25-Oct</text>
<text x="115.6" y="336.4" font-size="15.8" fill="#111" textLength="41.6" lengthAdjust="spacingAndGlyphs" >North</text>
<text x="195.4" y="336.4" font-size="15.8" fill="#111" textLength="24.1" lengthAdjust="spacingAndGlyphs" >Joe</text>
<line x1="0" y1="365.5" x2="31" y2="365.5" stroke="#bdbdbd" stroke-width="1" />
<line x1="33" y1="365.5" x2="431" y2="365.5" stroke="#8ea2cc" stroke-width="1" />
<line x1="111.5" y1="341" x2="111.5" y2="365" stroke="#b4b8c4" stroke-width="1" />
<line x1="191.5" y1="341" x2="191.5" y2="365" stroke="#b4b8c4" stroke-width="1" />
<line x1="271.5" y1="341" x2="271.5" y2="365" stroke="#b4b8c4" stroke-width="1" />
<line x1="351.5" y1="341" x2="351.5" y2="365" stroke="#b4b8c4" stroke-width="1" />
<text x="6.8" y="360.4" font-size="16.5" fill="#1f6b41" textLength="17.1" lengthAdjust="spacingAndGlyphs" >15</text>
<text x="58.6" y="360.4" font-size="15.8" fill="#111" textLength="48.8" lengthAdjust="spacingAndGlyphs" >26-Oct</text>
<text x="115.6" y="360.4" font-size="15.8" fill="#111" textLength="51.9" lengthAdjust="spacingAndGlyphs" >Central</text>
<text x="195.4" y="360.4" font-size="15.8" fill="#111" textLength="34.0" lengthAdjust="spacingAndGlyphs" >Polly</text>
<line x1="0" y1="389.5" x2="31" y2="389.5" stroke="#bdbdbd" stroke-width="1" />
<line x1="33" y1="389.5" x2="431" y2="389.5" stroke="#b9bccb" stroke-width="1" />
<line x1="111.5" y1="365" x2="111.5" y2="389" stroke="#b4b8c4" stroke-width="1" />
<line x1="191.5" y1="365" x2="191.5" y2="389" stroke="#b4b8c4" stroke-width="1" />
<line x1="271.5" y1="365" x2="271.5" y2="389" stroke="#b4b8c4" stroke-width="1" />
<line x1="351.5" y1="365" x2="351.5" y2="389" stroke="#b4b8c4" stroke-width="1" />
<text x="6.8" y="384.4" font-size="16.5" fill="#1f6b41" textLength="17.1" lengthAdjust="spacingAndGlyphs" >16</text>
<text x="58.6" y="384.4" font-size="15.8" fill="#111" textLength="48.8" lengthAdjust="spacingAndGlyphs" >21-Oct</text>
<text x="115.6" y="384.4" font-size="15.8" fill="#111" textLength="29.6" lengthAdjust="spacingAndGlyphs" >East</text>
<text x="195.4" y="384.4" font-size="15.8" fill="#111" textLength="31.5" lengthAdjust="spacingAndGlyphs" >Tom</text>
<line x1="0" y1="413.5" x2="31" y2="413.5" stroke="#bdbdbd" stroke-width="1" />
<line x1="33" y1="413.5" x2="431" y2="413.5" stroke="#8ea2cc" stroke-width="1" />
<line x1="111.5" y1="389" x2="111.5" y2="413" stroke="#b4b8c4" stroke-width="1" />
<line x1="191.5" y1="389" x2="191.5" y2="413" stroke="#b4b8c4" stroke-width="1" />
<line x1="271.5" y1="389" x2="271.5" y2="413" stroke="#b4b8c4" stroke-width="1" />
<line x1="351.5" y1="389" x2="351.5" y2="413" stroke="#b4b8c4" stroke-width="1" />
<text x="6.8" y="408.4" font-size="16.5" fill="#1f6b41" textLength="17.1" lengthAdjust="spacingAndGlyphs" >17</text>
<text x="58.6" y="408.4" font-size="15.8" fill="#111" textLength="48.8" lengthAdjust="spacingAndGlyphs" >22-Oct</text>
<text x="115.6" y="408.4" font-size="15.8" fill="#111" textLength="29.6" lengthAdjust="spacingAndGlyphs" >East</text>
<text x="195.4" y="408.4" font-size="15.8" fill="#111" textLength="44.0" lengthAdjust="spacingAndGlyphs" >Janice</text>
<line x1="0" y1="437.5" x2="31" y2="437.5" stroke="#bdbdbd" stroke-width="1" />
<line x1="33" y1="437.5" x2="431" y2="437.5" stroke="#b9bccb" stroke-width="1" />
<line x1="111.5" y1="413" x2="111.5" y2="437" stroke="#b4b8c4" stroke-width="1" />
<line x1="191.5" y1="413" x2="191.5" y2="437" stroke="#b4b8c4" stroke-width="1" />
<line x1="271.5" y1="413" x2="271.5" y2="437" stroke="#b4b8c4" stroke-width="1" />
<line x1="351.5" y1="413" x2="351.5" y2="437" stroke="#b4b8c4" stroke-width="1" />
<text x="6.8" y="432.4" font-size="16.5" fill="#1f6b41" textLength="17.1" lengthAdjust="spacingAndGlyphs" >18</text>
<text x="58.6" y="432.4" font-size="15.8" fill="#111" textLength="48.8" lengthAdjust="spacingAndGlyphs" >23-Oct</text>
<text x="115.6" y="432.4" font-size="15.8" fill="#111" textLength="51.9" lengthAdjust="spacingAndGlyphs" >Central</text>
<text x="195.4" y="432.4" font-size="15.8" fill="#111" textLength="31.9" lengthAdjust="spacingAndGlyphs" >Ford</text>
<line x1="0" y1="461.5" x2="31" y2="461.5" stroke="#bdbdbd" stroke-width="1" />
<line x1="33" y1="461.5" x2="431" y2="461.5" stroke="#8ea2cc" stroke-width="1" />
<line x1="111.5" y1="437" x2="111.5" y2="461" stroke="#b4b8c4" stroke-width="1" />
<line x1="191.5" y1="437" x2="191.5" y2="461" stroke="#b4b8c4" stroke-width="1" />
<line x1="271.5" y1="437" x2="271.5" y2="461" stroke="#b4b8c4" stroke-width="1" />
<line x1="351.5" y1="437" x2="351.5" y2="461" stroke="#b4b8c4" stroke-width="1" />
<text x="6.8" y="456.4" font-size="16.5" fill="#1f6b41" textLength="17.1" lengthAdjust="spacingAndGlyphs" >19</text>
<text x="58.6" y="456.4" font-size="15.8" fill="#111" textLength="48.8" lengthAdjust="spacingAndGlyphs" >24-Oct</text>
<text x="115.6" y="456.4" font-size="15.8" fill="#111" textLength="51.9" lengthAdjust="spacingAndGlyphs" >Central</text>
<text x="195.4" y="456.4" font-size="15.8" fill="#111" textLength="24.1" lengthAdjust="spacingAndGlyphs" >Joe</text>
<line x1="0" y1="485.5" x2="31" y2="485.5" stroke="#bdbdbd" stroke-width="1" />
<line x1="33" y1="485.5" x2="431" y2="485.5" stroke="#b9bccb" stroke-width="1" />
<line x1="111.5" y1="461" x2="111.5" y2="485" stroke="#b4b8c4" stroke-width="1" />
<line x1="191.5" y1="461" x2="191.5" y2="485" stroke="#b4b8c4" stroke-width="1" />
<line x1="271.5" y1="461" x2="271.5" y2="485" stroke="#b4b8c4" stroke-width="1" />
<line x1="351.5" y1="461" x2="351.5" y2="485" stroke="#b4b8c4" stroke-width="1" />
<text x="6.8" y="480.4" font-size="16.5" fill="#1f6b41" textLength="17.1" lengthAdjust="spacingAndGlyphs" >20</text>
<text x="58.6" y="480.4" font-size="15.8" fill="#111" textLength="48.8" lengthAdjust="spacingAndGlyphs" >25-Oct</text>
<text x="115.6" y="480.4" font-size="15.8" fill="#111" textLength="29.6" lengthAdjust="spacingAndGlyphs" >East</text>
<text x="195.4" y="480.4" font-size="15.8" fill="#111" textLength="31.9" lengthAdjust="spacingAndGlyphs" >Ford</text>
<line x1="0" y1="509.5" x2="31" y2="509.5" stroke="#bdbdbd" stroke-width="1" />
<line x1="33" y1="509.5" x2="431" y2="509.5" stroke="#8ea2cc" stroke-width="1" />
<line x1="111.5" y1="485" x2="111.5" y2="509" stroke="#b4b8c4" stroke-width="1" />
<line x1="191.5" y1="485" x2="191.5" y2="509" stroke="#b4b8c4" stroke-width="1" />
<line x1="271.5" y1="485" x2="271.5" y2="509" stroke="#b4b8c4" stroke-width="1" />
<line x1="351.5" y1="485" x2="351.5" y2="509" stroke="#b4b8c4" stroke-width="1" />
<text x="6.8" y="504.4" font-size="16.5" fill="#1f6b41" textLength="17.1" lengthAdjust="spacingAndGlyphs" >21</text>
<text x="58.6" y="504.4" font-size="15.8" fill="#111" textLength="48.8" lengthAdjust="spacingAndGlyphs" >26-Oct</text>
<text x="115.6" y="504.4" font-size="15.8" fill="#111" textLength="29.6" lengthAdjust="spacingAndGlyphs" >East</text>
<text x="195.4" y="504.4" font-size="15.8" fill="#111" textLength="34.0" lengthAdjust="spacingAndGlyphs" >Polly</text>
<line x1="0" y1="533.5" x2="31" y2="533.5" stroke="#bdbdbd" stroke-width="1" />
<line x1="33" y1="533.5" x2="431" y2="533.5" stroke="#b9bccb" stroke-width="1" />
<line x1="111.5" y1="509" x2="111.5" y2="533" stroke="#b4b8c4" stroke-width="1" />
<line x1="191.5" y1="509" x2="191.5" y2="533" stroke="#b4b8c4" stroke-width="1" />
<line x1="271.5" y1="509" x2="271.5" y2="533" stroke="#b4b8c4" stroke-width="1" />
<line x1="351.5" y1="509" x2="351.5" y2="533" stroke="#b4b8c4" stroke-width="1" />
<text x="6.8" y="528.4" font-size="16.5" fill="#1f6b41" textLength="17.1" lengthAdjust="spacingAndGlyphs" >22</text>
<text x="58.6" y="528.4" font-size="15.8" fill="#111" textLength="48.8" lengthAdjust="spacingAndGlyphs" >27-Oct</text>
<text x="115.6" y="528.4" font-size="15.8" fill="#111" textLength="29.6" lengthAdjust="spacingAndGlyphs" >East</text>
<text x="195.4" y="528.4" font-size="15.8" fill="#111" textLength="31.9" lengthAdjust="spacingAndGlyphs" >Ford</text>
<line x1="0" y1="557.5" x2="31" y2="557.5" stroke="#bdbdbd" stroke-width="1" />
<line x1="33" y1="557.5" x2="431" y2="557.5" stroke="#8ea2cc" stroke-width="1" />
<line x1="111.5" y1="533" x2="111.5" y2="557" stroke="#b4b8c4" stroke-width="1" />
<line x1="191.5" y1="533" x2="191.5" y2="557" stroke="#b4b8c4" stroke-width="1" />
<line x1="271.5" y1="533" x2="271.5" y2="557" stroke="#b4b8c4" stroke-width="1" />
<line x1="351.5" y1="533" x2="351.5" y2="557" stroke="#b4b8c4" stroke-width="1" />
<text x="6.8" y="552.4" font-size="16.5" fill="#1f6b41" textLength="17.1" lengthAdjust="spacingAndGlyphs" >23</text>
<text x="58.6" y="552.4" font-size="15.8" fill="#111" textLength="48.8" lengthAdjust="spacingAndGlyphs" >28-Oct</text>
<text x="115.6" y="552.4" font-size="15.8" fill="#111" textLength="29.6" lengthAdjust="spacingAndGlyphs" >East</text>
<text x="195.4" y="552.4" font-size="15.8" fill="#111" textLength="44.0" lengthAdjust="spacingAndGlyphs" >Janice</text>
<line x1="0" y1="581.5" x2="31" y2="581.5" stroke="#bdbdbd" stroke-width="1" />
<line x1="33" y1="581.5" x2="431" y2="581.5" stroke="#b9bccb" stroke-width="1" />
<line x1="111.5" y1="557" x2="111.5" y2="581" stroke="#b4b8c4" stroke-width="1" />
<line x1="191.5" y1="557" x2="191.5" y2="581" stroke="#b4b8c4" stroke-width="1" />
<line x1="271.5" y1="557" x2="271.5" y2="581" stroke="#b4b8c4" stroke-width="1" />
<line x1="351.5" y1="557" x2="351.5" y2="581" stroke="#b4b8c4" stroke-width="1" />
<text x="6.8" y="576.4" font-size="16.5" fill="#1f6b41" textLength="17.1" lengthAdjust="spacingAndGlyphs" >24</text>
<text x="58.6" y="576.4" font-size="15.8" fill="#111" textLength="48.8" lengthAdjust="spacingAndGlyphs" >21-Oct</text>
<text x="115.6" y="576.4" font-size="15.8" fill="#111" textLength="41.6" lengthAdjust="spacingAndGlyphs" >North</text>
<text x="195.4" y="576.4" font-size="15.8" fill="#111" textLength="31.9" lengthAdjust="spacingAndGlyphs" >Ford</text>
<line x1="0" y1="605.5" x2="31" y2="605.5" stroke="#bdbdbd" stroke-width="1" />
<line x1="33" y1="605.5" x2="431" y2="605.5" stroke="#8ea2cc" stroke-width="1" />
<line x1="111.5" y1="581" x2="111.5" y2="605" stroke="#b4b8c4" stroke-width="1" />
<line x1="191.5" y1="581" x2="191.5" y2="605" stroke="#b4b8c4" stroke-width="1" />
<line x1="271.5" y1="581" x2="271.5" y2="605" stroke="#b4b8c4" stroke-width="1" />
<line x1="351.5" y1="581" x2="351.5" y2="605" stroke="#b4b8c4" stroke-width="1" />
<text x="6.8" y="600.4" font-size="16.5" fill="#1f6b41" textLength="17.1" lengthAdjust="spacingAndGlyphs" >25</text>
<text x="58.6" y="600.4" font-size="15.8" fill="#111" textLength="48.8" lengthAdjust="spacingAndGlyphs" >22-Oct</text>
<text x="115.6" y="600.4" font-size="15.8" fill="#111" textLength="41.6" lengthAdjust="spacingAndGlyphs" >North</text>
<text x="195.4" y="600.4" font-size="15.8" fill="#111" textLength="44.0" lengthAdjust="spacingAndGlyphs" >Janice</text>
<line x1="0" y1="629.5" x2="31" y2="629.5" stroke="#bdbdbd" stroke-width="1" />
<line x1="33" y1="629.5" x2="431" y2="629.5" stroke="#b9bccb" stroke-width="1" />
<line x1="111.5" y1="605" x2="111.5" y2="629" stroke="#b4b8c4" stroke-width="1" />
<line x1="191.5" y1="605" x2="191.5" y2="629" stroke="#b4b8c4" stroke-width="1" />
<line x1="271.5" y1="605" x2="271.5" y2="629" stroke="#b4b8c4" stroke-width="1" />
<line x1="351.5" y1="605" x2="351.5" y2="629" stroke="#b4b8c4" stroke-width="1" />
<text x="6.8" y="624.4" font-size="16.5" fill="#1f6b41" textLength="17.1" lengthAdjust="spacingAndGlyphs" >26</text>
<text x="58.6" y="624.4" font-size="15.8" fill="#111" textLength="48.8" lengthAdjust="spacingAndGlyphs" >23-Oct</text>
<text x="115.6" y="624.4" font-size="15.8" fill="#111" textLength="51.9" lengthAdjust="spacingAndGlyphs" >Central</text>
<text x="195.4" y="624.4" font-size="15.8" fill="#111" textLength="31.9" lengthAdjust="spacingAndGlyphs" >Ford</text>
<line x1="0" y1="653.5" x2="31" y2="653.5" stroke="#bdbdbd" stroke-width="1" />
<line x1="33" y1="653.5" x2="431" y2="653.5" stroke="#8ea2cc" stroke-width="1" />
<line x1="111.5" y1="629" x2="111.5" y2="653" stroke="#b4b8c4" stroke-width="1" />
<line x1="191.5" y1="629" x2="191.5" y2="653" stroke="#b4b8c4" stroke-width="1" />
<line x1="271.5" y1="629" x2="271.5" y2="653" stroke="#b4b8c4" stroke-width="1" />
<line x1="351.5" y1="629" x2="351.5" y2="653" stroke="#b4b8c4" stroke-width="1" />
<text x="6.8" y="648.4" font-size="16.5" fill="#1f6b41" textLength="17.1" lengthAdjust="spacingAndGlyphs" >27</text>
<text x="58.6" y="648.4" font-size="15.8" fill="#111" textLength="48.8" lengthAdjust="spacingAndGlyphs" >24-Oct</text>
<text x="115.6" y="648.4" font-size="15.8" fill="#111" textLength="29.6" lengthAdjust="spacingAndGlyphs" >East</text>
<text x="195.4" y="648.4" font-size="15.8" fill="#111" textLength="44.0" lengthAdjust="spacingAndGlyphs" >Janice</text>
<line x1="0" y1="677.5" x2="31" y2="677.5" stroke="#bdbdbd" stroke-width="1" />
<line x1="33" y1="677.5" x2="431" y2="677.5" stroke="#b9bccb" stroke-width="1" />
<line x1="111.5" y1="653" x2="111.5" y2="677" stroke="#b4b8c4" stroke-width="1" />
<line x1="191.5" y1="653" x2="191.5" y2="677" stroke="#b4b8c4" stroke-width="1" />
<line x1="271.5" y1="653" x2="271.5" y2="677" stroke="#b4b8c4" stroke-width="1" />
<line x1="351.5" y1="653" x2="351.5" y2="677" stroke="#b4b8c4" stroke-width="1" />
<text x="6.8" y="672.4" font-size="16.5" fill="#1f6b41" textLength="17.1" lengthAdjust="spacingAndGlyphs" >28</text>
<text x="58.6" y="672.4" font-size="15.8" fill="#111" textLength="48.8" lengthAdjust="spacingAndGlyphs" >25-Oct</text>
<text x="115.6" y="672.4" font-size="15.8" fill="#111" textLength="41.6" lengthAdjust="spacingAndGlyphs" >North</text>
<text x="195.4" y="672.4" font-size="15.8" fill="#111" textLength="24.1" lengthAdjust="spacingAndGlyphs" >Joe</text>
<line x1="0" y1="701.5" x2="31" y2="701.5" stroke="#bdbdbd" stroke-width="1" />
<line x1="33" y1="701.5" x2="431" y2="701.5" stroke="#8ea2cc" stroke-width="1" />
<line x1="111.5" y1="677" x2="111.5" y2="701" stroke="#b4b8c4" stroke-width="1" />
<line x1="191.5" y1="677" x2="191.5" y2="701" stroke="#b4b8c4" stroke-width="1" />
<line x1="271.5" y1="677" x2="271.5" y2="701" stroke="#b4b8c4" stroke-width="1" />
<line x1="351.5" y1="677" x2="351.5" y2="701" stroke="#b4b8c4" stroke-width="1" />
<text x="6.8" y="696.4" font-size="16.5" fill="#1f6b41" textLength="17.1" lengthAdjust="spacingAndGlyphs" >29</text>
<text x="58.6" y="696.4" font-size="15.8" fill="#111" textLength="48.8" lengthAdjust="spacingAndGlyphs" >26-Oct</text>
<text x="115.6" y="696.4" font-size="15.8" fill="#111" textLength="51.9" lengthAdjust="spacingAndGlyphs" >Central</text>
<text x="195.4" y="696.4" font-size="15.8" fill="#111" textLength="34.0" lengthAdjust="spacingAndGlyphs" >Polly</text>
<line x1="0" y1="725.5" x2="31" y2="725.5" stroke="#bdbdbd" stroke-width="1" />
<line x1="33" y1="725.5" x2="431" y2="725.5" stroke="#b9bccb" stroke-width="1" />
<line x1="111.5" y1="701" x2="111.5" y2="725" stroke="#b4b8c4" stroke-width="1" />
<line x1="191.5" y1="701" x2="191.5" y2="725" stroke="#b4b8c4" stroke-width="1" />
<line x1="271.5" y1="701" x2="271.5" y2="725" stroke="#b4b8c4" stroke-width="1" />
<line x1="351.5" y1="701" x2="351.5" y2="725" stroke="#b4b8c4" stroke-width="1" />
<text x="6.8" y="720.4" font-size="16.5" fill="#1f6b41" textLength="17.1" lengthAdjust="spacingAndGlyphs" >30</text>
<text x="58.6" y="720.4" font-size="15.8" fill="#111" textLength="48.8" lengthAdjust="spacingAndGlyphs" >21-Oct</text>
<text x="115.6" y="720.4" font-size="15.8" fill="#111" textLength="29.6" lengthAdjust="spacingAndGlyphs" >East</text>
<text x="195.4" y="720.4" font-size="15.8" fill="#111" textLength="31.5" lengthAdjust="spacingAndGlyphs" >Tom</text>
<line x1="0" y1="749.5" x2="31" y2="749.5" stroke="#bdbdbd" stroke-width="1" />
<line x1="33" y1="749.5" x2="431" y2="749.5" stroke="#8ea2cc" stroke-width="1" />
<line x1="111.5" y1="725" x2="111.5" y2="749" stroke="#b4b8c4" stroke-width="1" />
<line x1="191.5" y1="725" x2="191.5" y2="749" stroke="#b4b8c4" stroke-width="1" />
<line x1="271.5" y1="725" x2="271.5" y2="749" stroke="#b4b8c4" stroke-width="1" />
<line x1="351.5" y1="725" x2="351.5" y2="749" stroke="#b4b8c4" stroke-width="1" />
<text x="6.8" y="744.4" font-size="16.5" fill="#1f6b41" textLength="17.1" lengthAdjust="spacingAndGlyphs" >31</text>
<text x="58.6" y="744.4" font-size="15.8" fill="#111" textLength="48.8" lengthAdjust="spacingAndGlyphs" >22-Oct</text>
<text x="115.6" y="744.4" font-size="15.8" fill="#111" textLength="29.6" lengthAdjust="spacingAndGlyphs" >East</text>
<text x="195.4" y="744.4" font-size="15.8" fill="#111" textLength="44.0" lengthAdjust="spacingAndGlyphs" >Janice</text>
<line x1="0" y1="773.5" x2="31" y2="773.5" stroke="#bdbdbd" stroke-width="1" />
<line x1="33" y1="773.5" x2="431" y2="773.5" stroke="#b9bccb" stroke-width="1" />
<line x1="111.5" y1="749" x2="111.5" y2="773" stroke="#b4b8c4" stroke-width="1" />
<line x1="191.5" y1="749" x2="191.5" y2="773" stroke="#b4b8c4" stroke-width="1" />
<line x1="271.5" y1="749" x2="271.5" y2="773" stroke="#b4b8c4" stroke-width="1" />
<line x1="351.5" y1="749" x2="351.5" y2="773" stroke="#b4b8c4" stroke-width="1" />
<text x="6.8" y="768.4" font-size="16.5" fill="#1f6b41" textLength="17.1" lengthAdjust="spacingAndGlyphs" >32</text>
<text x="58.6" y="768.4" font-size="15.8" fill="#111" textLength="48.8" lengthAdjust="spacingAndGlyphs" >23-Oct</text>
<text x="115.6" y="768.4" font-size="15.8" fill="#111" textLength="51.9" lengthAdjust="spacingAndGlyphs" >Central</text>
<text x="195.4" y="768.4" font-size="15.8" fill="#111" textLength="31.9" lengthAdjust="spacingAndGlyphs" >Ford</text>
<line x1="0" y1="797.5" x2="31" y2="797.5" stroke="#bdbdbd" stroke-width="1" />
<line x1="33" y1="797.5" x2="431" y2="797.5" stroke="#8ea2cc" stroke-width="1" />
<line x1="111.5" y1="773" x2="111.5" y2="797" stroke="#b4b8c4" stroke-width="1" />
<line x1="191.5" y1="773" x2="191.5" y2="797" stroke="#b4b8c4" stroke-width="1" />
<line x1="271.5" y1="773" x2="271.5" y2="797" stroke="#b4b8c4" stroke-width="1" />
<line x1="351.5" y1="773" x2="351.5" y2="797" stroke="#b4b8c4" stroke-width="1" />
<text x="6.8" y="792.4" font-size="16.5" fill="#1f6b41" textLength="17.1" lengthAdjust="spacingAndGlyphs" >33</text>
<text x="58.6" y="792.4" font-size="15.8" fill="#111" textLength="48.8" lengthAdjust="spacingAndGlyphs" >24-Oct</text>
<text x="115.6" y="792.4" font-size="15.8" fill="#111" textLength="51.9" lengthAdjust="spacingAndGlyphs" >Central</text>
<text x="195.4" y="792.4" font-size="15.8" fill="#111" textLength="24.1" lengthAdjust="spacingAndGlyphs" >Joe</text>
<line x1="0" y1="821.5" x2="31" y2="821.5" stroke="#bdbdbd" stroke-width="1" />
<line x1="33" y1="821.5" x2="431" y2="821.5" stroke="#b9bccb" stroke-width="1" />
<line x1="111.5" y1="797" x2="111.5" y2="821" stroke="#b4b8c4" stroke-width="1" />
<line x1="191.5" y1="797" x2="191.5" y2="821" stroke="#b4b8c4" stroke-width="1" />
<line x1="271.5" y1="797" x2="271.5" y2="821" stroke="#b4b8c4" stroke-width="1" />
<line x1="351.5" y1="797" x2="351.5" y2="821" stroke="#b4b8c4" stroke-width="1" />
<text x="6.8" y="816.4" font-size="16.5" fill="#1f6b41" textLength="17.1" lengthAdjust="spacingAndGlyphs" >34</text>
<text x="58.6" y="816.4" font-size="15.8" fill="#111" textLength="48.8" lengthAdjust="spacingAndGlyphs" >25-Oct</text>
<text x="115.6" y="816.4" font-size="15.8" fill="#111" textLength="29.6" lengthAdjust="spacingAndGlyphs" >East</text>
<text x="195.4" y="816.4" font-size="15.8" fill="#111" textLength="31.9" lengthAdjust="spacingAndGlyphs" >Ford</text>
<line x1="0" y1="845.5" x2="31" y2="845.5" stroke="#bdbdbd" stroke-width="1" />
<line x1="33" y1="845.5" x2="431" y2="845.5" stroke="#8ea2cc" stroke-width="1" />
<line x1="111.5" y1="821" x2="111.5" y2="845" stroke="#b4b8c4" stroke-width="1" />
<line x1="191.5" y1="821" x2="191.5" y2="845" stroke="#b4b8c4" stroke-width="1" />
<line x1="271.5" y1="821" x2="271.5" y2="845" stroke="#b4b8c4" stroke-width="1" />
<line x1="351.5" y1="821" x2="351.5" y2="845" stroke="#b4b8c4" stroke-width="1" />
<text x="6.8" y="840.4" font-size="16.5" fill="#1f6b41" textLength="17.1" lengthAdjust="spacingAndGlyphs" >35</text>
<text x="58.6" y="840.4" font-size="15.8" fill="#111" textLength="48.8" lengthAdjust="spacingAndGlyphs" >26-Oct</text>
<text x="115.6" y="840.4" font-size="15.8" fill="#111" textLength="29.6" lengthAdjust="spacingAndGlyphs" >East</text>
<text x="195.4" y="840.4" font-size="15.8" fill="#111" textLength="34.0" lengthAdjust="spacingAndGlyphs" >Polly</text>
<line x1="0" y1="869.5" x2="31" y2="869.5" stroke="#bdbdbd" stroke-width="1" />
<line x1="33" y1="869.5" x2="431" y2="869.5" stroke="#b9bccb" stroke-width="1" />
<line x1="111.5" y1="845" x2="111.5" y2="869" stroke="#b4b8c4" stroke-width="1" />
<line x1="191.5" y1="845" x2="191.5" y2="869" stroke="#b4b8c4" stroke-width="1" />
<line x1="271.5" y1="845" x2="271.5" y2="869" stroke="#b4b8c4" stroke-width="1" />
<line x1="351.5" y1="845" x2="351.5" y2="869" stroke="#b4b8c4" stroke-width="1" />
<text x="6.8" y="864.4" font-size="16.5" fill="#1f6b41" textLength="17.1" lengthAdjust="spacingAndGlyphs" >36</text>
<text x="58.6" y="864.4" font-size="15.8" fill="#111" textLength="48.8" lengthAdjust="spacingAndGlyphs" >27-Oct</text>
<text x="115.6" y="864.4" font-size="15.8" fill="#111" textLength="29.6" lengthAdjust="spacingAndGlyphs" >East</text>
<text x="195.4" y="864.4" font-size="15.8" fill="#111" textLength="31.9" lengthAdjust="spacingAndGlyphs" >Ford</text>
<line x1="0" y1="893.5" x2="31" y2="893.5" stroke="#bdbdbd" stroke-width="1" />
<line x1="33" y1="893.5" x2="431" y2="893.5" stroke="#8ea2cc" stroke-width="1" />
<line x1="111.5" y1="869" x2="111.5" y2="893" stroke="#b4b8c4" stroke-width="1" />
<line x1="191.5" y1="869" x2="191.5" y2="893" stroke="#b4b8c4" stroke-width="1" />
<line x1="271.5" y1="869" x2="271.5" y2="893" stroke="#b4b8c4" stroke-width="1" />
<line x1="351.5" y1="869" x2="351.5" y2="893" stroke="#b4b8c4" stroke-width="1" />
<text x="6.8" y="888.4" font-size="16.5" fill="#1f6b41" textLength="17.1" lengthAdjust="spacingAndGlyphs" >37</text>
<text x="58.6" y="888.4" font-size="15.8" fill="#111" textLength="48.8" lengthAdjust="spacingAndGlyphs" >28-Oct</text>
<text x="115.6" y="888.4" font-size="15.8" fill="#111" textLength="29.6" lengthAdjust="spacingAndGlyphs" >East</text>
<text x="195.4" y="888.4" font-size="15.8" fill="#111" textLength="44.0" lengthAdjust="spacingAndGlyphs" >Janice</text>
<text x="275.4" y="888.4" font-size="15.8" fill="#111" textLength="46.2" lengthAdjust="spacingAndGlyphs" >Binder</text>
<text x="410.6" y="888.4" font-size="15.8" fill="#111" textLength="16.8" lengthAdjust="spacingAndGlyphs" >34</text>
<line x1="0" y1="917.5" x2="31" y2="917.5" stroke="#bdbdbd" stroke-width="1" />
<line x1="33" y1="917.5" x2="431" y2="917.5" stroke="#b9bccb" stroke-width="1" />
<line x1="111.5" y1="893" x2="111.5" y2="917" stroke="#b4b8c4" stroke-width="1" />
<line x1="191.5" y1="893" x2="191.5" y2="917" stroke="#b4b8c4" stroke-width="1" />
<line x1="271.5" y1="893" x2="271.5" y2="917" stroke="#b4b8c4" stroke-width="1" />
<line x1="351.5" y1="893" x2="351.5" y2="917" stroke="#b4b8c4" stroke-width="1" />
<text x="6.8" y="912.4" font-size="16.5" fill="#1f6b41" textLength="17.1" lengthAdjust="spacingAndGlyphs" >38</text>
<text x="58.6" y="912.4" font-size="15.8" fill="#111" textLength="48.8" lengthAdjust="spacingAndGlyphs" >21-Oct</text>
<text x="115.6" y="912.4" font-size="15.8" fill="#111" textLength="41.6" lengthAdjust="spacingAndGlyphs" >North</text>
<text x="195.4" y="912.4" font-size="15.8" fill="#111" textLength="31.9" lengthAdjust="spacingAndGlyphs" >Ford</text>
<text x="275.4" y="912.4" font-size="15.8" fill="#111" textLength="26.0" lengthAdjust="spacingAndGlyphs" >Pen</text>
<text x="410.6" y="912.4" font-size="15.8" fill="#111" textLength="16.8" lengthAdjust="spacingAndGlyphs" >35</text>
<rect x="31" y="268" width="400" height="2" fill="#1f7145" />
<rect x="31" y="292" width="400" height="2" fill="#1f7145" />
<rect x="31" y="293" width="2" height="620" fill="#1f7145" />
<rect x="431" y="269" width="2" height="644" fill="#1f7145" />
<rect x="227" y="128" width="806" height="812" rx="20" fill="#000" opacity="0.165" filter="url(#shadow)"/>
<rect x="222" y="125" width="792.6" height="749" rx="8" fill="#000" opacity="0.10" filter="url(#shadow2)"/>
<g clip-path="url(#dlgclip)">
<rect x="222" y="122" width="793" height="749" fill="#f0f0f0" />
<rect x="222" y="122" width="793" height="46" fill="url(#dlgtitle)" />
</g>
<rect x="222.4" y="122.4" width="791.8" height="748.2" rx="8" ry="8" fill="none" stroke="#9b9b9b" stroke-width="0.8" opacity="0.55"/>
<text x="231.2" y="145.8" font-size="15" fill="#1b1b1b" textLength="76.4" lengthAdjust="spacingAndGlyphs" >Insert Chart</text>
<text x="923.2" y="146.3" font-size="17" fill="#1b1b1b" textLength="7.0" lengthAdjust="spacingAndGlyphs" stroke="#1b1b1b" stroke-width="0.35">?</text>
<path d="M978 134.2 L990.4 146.4 M990.4 134.2 L978 146.4" fill="none" stroke="#1b1b1b" stroke-width="1.25" />
<rect x="229.5" y="189.5" width="774" height="637" fill="#fafafa" stroke="#e3e3e3" stroke-width="1"/>
<rect x="373.7" y="171" width="67.3" height="19" fill="#f1f1f1" stroke="#e1e1e1" stroke-width="1"/>
<text x="379.5" y="185.7" font-size="13" fill="#111" textLength="54.5" lengthAdjust="spacingAndGlyphs" >All Charts</text>
<rect x="229.5" y="168.5" width="144.2" height="22" fill="#fafafa" stroke="#e3e3e3" stroke-width="1"/>
<rect x="230" y="188.5" width="143.2" height="3" fill="#fafafa" />
<rect x="232.5" y="171" width="138.6" height="17" fill="none" stroke="#222" stroke-width="1" stroke-dasharray="1 1.6"/>
<text x="236.5" y="183.7" font-size="13" fill="#111" textLength="128.3" lengthAdjust="spacingAndGlyphs" >Recommended Charts</text>
<rect x="244" y="204" width="211" height="609" fill="#fdfdfd" />
<rect x="455.6" y="204" width="18.6" height="609" fill="#efefef" />
<rect x="462.2" y="225" width="6" height="442" fill="#8a8a8a" />
<rect x="486.2" y="204.2" width="505.5" height="608.2" fill="#ffffff" />
<text x="493.0" y="227.0" font-size="19.5" fill="#111" textLength="154.7" lengthAdjust="spacingAndGlyphs" >Clustered Column</text>
<line x1="492" y1="238.4" x2="965" y2="238.4" stroke="#d6d6d6" stroke-width="1" />
<line x1="964.5" y1="238" x2="964.5" y2="521" stroke="#e2e2e2" stroke-width="1" />
<text x="652.5" y="265.7" font-size="16.5" fill="#595959" textLength="150.5" lengthAdjust="spacingAndGlyphs" >Sum of Units by Rep</text>
<line x1="529" y1="491.5" x2="950" y2="491.5" stroke="#dfdfdf" stroke-width="1" />
<text x="511.6" y="494.4" font-size="11.2" fill="#595959" textLength="6.0" lengthAdjust="spacingAndGlyphs" >0</text>
<line x1="529" y1="457.3" x2="950" y2="457.3" stroke="#dfdfdf" stroke-width="1" />
<text x="499.5" y="460.2" font-size="11.2" fill="#595959" textLength="18.1" lengthAdjust="spacingAndGlyphs" >100</text>
<line x1="529" y1="423.1" x2="950" y2="423.1" stroke="#dfdfdf" stroke-width="1" />
<text x="499.5" y="426.0" font-size="11.2" fill="#595959" textLength="18.1" lengthAdjust="spacingAndGlyphs" >200</text>
<line x1="529" y1="388.9" x2="950" y2="388.9" stroke="#dfdfdf" stroke-width="1" />
<text x="499.5" y="391.8" font-size="11.2" fill="#595959" textLength="18.1" lengthAdjust="spacingAndGlyphs" >300</text>
<line x1="529" y1="354.7" x2="950" y2="354.7" stroke="#dfdfdf" stroke-width="1" />
<text x="499.5" y="357.6" font-size="11.2" fill="#595959" textLength="18.1" lengthAdjust="spacingAndGlyphs" >400</text>
<line x1="529" y1="320.5" x2="950" y2="320.5" stroke="#dfdfdf" stroke-width="1" />
<text x="499.5" y="323.4" font-size="11.2" fill="#595959" textLength="18.1" lengthAdjust="spacingAndGlyphs" >500</text>
<line x1="529" y1="286.3" x2="950" y2="286.3" stroke="#dfdfdf" stroke-width="1" />
<text x="499.5" y="289.2" font-size="11.2" fill="#595959" textLength="18.1" lengthAdjust="spacingAndGlyphs" >600</text>
<rect x="557" y="332.47" width="26.7" height="159.03" fill="#4472c4" />
<text x="558.8" y="510.0" font-size="12" fill="#595959" textLength="23.2" lengthAdjust="spacingAndGlyphs" >Ford</text>
<rect x="641.3" y="324.604" width="26.7" height="166.896" fill="#4472c4" />
<text x="638.4" y="510.0" font-size="12" fill="#595959" textLength="32.6" lengthAdjust="spacingAndGlyphs" >Janice</text>
<rect x="725.6" y="317.764" width="26.7" height="173.736" fill="#4472c4" />
<text x="729.9" y="510.0" font-size="12" fill="#595959" textLength="18.2" lengthAdjust="spacingAndGlyphs" >Joe</text>
<rect x="809.9" y="443.62" width="26.7" height="47.88" fill="#4472c4" />
<text x="811.1" y="510.0" font-size="12" fill="#595959" textLength="24.4" lengthAdjust="spacingAndGlyphs" >Polly</text>
<rect x="894.2" y="394.03" width="26.7" height="97.47" fill="#4472c4" />
<text x="896.9" y="510.0" font-size="12" fill="#595959" textLength="21.3" lengthAdjust="spacingAndGlyphs" >Tom</text>
<text x="493.0" y="545.6" font-size="12.6" fill="#111" textLength="483.2" lengthAdjust="spacingAndGlyphs" >A clustered column chart is used to compare values across a few categories. Use it</text>
<text x="493.0" y="562.6" font-size="12.6" fill="#111" textLength="270.4" lengthAdjust="spacingAndGlyphs" >when the order of categories is not important.</text>
<g clip-path="url(#listclip)">
<rect x="244.5" y="204.3" width="209.2" height="129.2" fill="#c9cbc9" stroke="#7c7c7c" stroke-width="1.2"/>
<rect x="249.8" y="209.6" width="198.8" height="118.6" fill="#ffffff" />
<text x="317.0" y="220.9" font-size="7.3" fill="#595959" textLength="64.0" lengthAdjust="spacingAndGlyphs" >Sum of Units by Rep</text>
<line x1="265" y1="316.3" x2="443" y2="316.3" stroke="#dcdcdc" stroke-width="0.9" />
<text x="257.4" y="317.9" font-size="4.6" fill="#555" >0</text>
<line x1="265" y1="301.817" x2="443" y2="301.817" stroke="#dcdcdc" stroke-width="0.9" />
<text x="252.3" y="303.4" font-size="4.6" fill="#555" >100</text>
<line x1="265" y1="287.333" x2="443" y2="287.333" stroke="#dcdcdc" stroke-width="0.9" />
<text x="252.3" y="288.9" font-size="4.6" fill="#555" >200</text>
<line x1="265" y1="272.85" x2="443" y2="272.85" stroke="#dcdcdc" stroke-width="0.9" />
<text x="252.3" y="274.5" font-size="4.6" fill="#555" >300</text>
<line x1="265" y1="258.367" x2="443" y2="258.367" stroke="#dcdcdc" stroke-width="0.9" />
<text x="252.3" y="260.0" font-size="4.6" fill="#555" >400</text>
<line x1="265" y1="243.883" x2="443" y2="243.883" stroke="#dcdcdc" stroke-width="0.9" />
<text x="252.3" y="245.5" font-size="4.6" fill="#555" >500</text>
<line x1="265" y1="229.4" x2="443" y2="229.4" stroke="#dcdcdc" stroke-width="0.9" />
<text x="252.3" y="231.0" font-size="4.6" fill="#555" >600</text>
<rect x="277" y="248.953" width="11" height="67.3475" fill="#4472c4" />
<text x="277.6" y="323.8" font-size="4.8" fill="#555" >Ford</text>
<rect x="312.6" y="245.621" width="11" height="70.6787" fill="#4472c4" />
<text x="311.2" y="323.8" font-size="4.8" fill="#555" >Janice</text>
<rect x="348.2" y="242.725" width="11" height="73.5753" fill="#4472c4" />
<text x="349.8" y="323.8" font-size="4.8" fill="#555" >Joe</text>
<rect x="383.8" y="296.023" width="11" height="20.2767" fill="#4472c4" />
<text x="384.1" y="323.8" font-size="4.8" fill="#555" >Polly</text>
<rect x="419.4" y="275.023" width="11" height="41.2775" fill="#4472c4" />
<text x="420.4" y="323.8" font-size="4.8" fill="#555" >Tom</text>
<rect x="249" y="339" width="200" height="120" fill="#ffffff" stroke="#e6e6e6" stroke-width="1"/>
<text x="332.5" y="351.2" font-size="7.3" fill="#595959" textLength="33.0" lengthAdjust="spacingAndGlyphs" >Chart Title</text>
<line x1="265" y1="446.2" x2="443" y2="446.2" stroke="#dcdcdc" stroke-width="0.9" />
<text x="257.4" y="447.8" font-size="4.6" fill="#555" >0</text>
<line x1="265" y1="437.5" x2="443" y2="437.5" stroke="#dcdcdc" stroke-width="0.9" />
<text x="254.9" y="439.1" font-size="4.6" fill="#555" >10</text>
<line x1="265" y1="428.8" x2="443" y2="428.8" stroke="#dcdcdc" stroke-width="0.9" />
<text x="254.9" y="430.4" font-size="4.6" fill="#555" >20</text>
<line x1="265" y1="420.1" x2="443" y2="420.1" stroke="#dcdcdc" stroke-width="0.9" />
<text x="254.9" y="421.7" font-size="4.6" fill="#555" >30</text>
<line x1="265" y1="411.4" x2="443" y2="411.4" stroke="#dcdcdc" stroke-width="0.9" />
<text x="254.9" y="413.0" font-size="4.6" fill="#555" >40</text>
<line x1="265" y1="402.7" x2="443" y2="402.7" stroke="#dcdcdc" stroke-width="0.9" />
<text x="254.9" y="404.3" font-size="4.6" fill="#555" >50</text>
<line x1="265" y1="394" x2="443" y2="394" stroke="#dcdcdc" stroke-width="0.9" />
<text x="254.9" y="395.6" font-size="4.6" fill="#555" >60</text>
<line x1="265" y1="385.3" x2="443" y2="385.3" stroke="#dcdcdc" stroke-width="0.9" />
<text x="254.9" y="386.9" font-size="4.6" fill="#555" >70</text>
<line x1="265" y1="376.6" x2="443" y2="376.6" stroke="#dcdcdc" stroke-width="0.9" />
<text x="254.9" y="378.2" font-size="4.6" fill="#555" >80</text>
<line x1="265" y1="367.9" x2="443" y2="367.9" stroke="#dcdcdc" stroke-width="0.9" />
<text x="254.9" y="369.5" font-size="4.6" fill="#555" >90</text>
<line x1="265" y1="359.2" x2="443" y2="359.2" stroke="#dcdcdc" stroke-width="0.9" />
<text x="252.3" y="360.8" font-size="4.6" fill="#555" >100</text>
<path d="M276.0 363.5 L276.0 415.8 L298.3 407.1 L298.3 397.5 L320.6 416.6 L320.6 436.6 L342.9 376.6 L342.9 421.8 L365.2 437.5 L365.2 367.9 L387.5 427.1 L409.8 389.6 L432.1 416.6" fill="none" stroke="#3f6fbf" stroke-width="1.15" stroke-linejoin="round"/>
<line x1="276" y1="363.55" x2="276" y2="415.75" stroke="#3f6fbf" stroke-width="1.9" />
<line x1="365.2" y1="437.5" x2="365.2" y2="367.9" stroke="#3f6fbf" stroke-width="1.9" />
<text x="269.7" y="452.8" font-size="4.2" fill="#555" >21-Oct</text>
<text x="292.0" y="452.8" font-size="4.2" fill="#555" >22-Oct</text>
<text x="314.3" y="452.8" font-size="4.2" fill="#555" >23-Oct</text>
<text x="336.6" y="452.8" font-size="4.2" fill="#555" >24-Oct</text>
<text x="358.9" y="452.8" font-size="4.2" fill="#555" >25-Oct</text>
<text x="381.2" y="452.8" font-size="4.2" fill="#555" >26-Oct</text>
<text x="403.5" y="452.8" font-size="4.2" fill="#555" >27-Oct</text>
<text x="425.8" y="452.8" font-size="4.2" fill="#555" >28-Oct</text>
<rect x="249" y="469" width="200" height="120" fill="#ffffff" stroke="#e6e6e6" stroke-width="1"/>
<text x="316.0" y="481.2" font-size="7.3" fill="#595959" textLength="66.0" lengthAdjust="spacingAndGlyphs" >Sum of Units by Item</text>
<line x1="265" y1="576" x2="443" y2="576" stroke="#dcdcdc" stroke-width="0.9" />
<text x="257.4" y="577.6" font-size="4.6" fill="#555" >0</text>
<line x1="265" y1="566.367" x2="443" y2="566.367" stroke="#dcdcdc" stroke-width="0.9" />
<text x="252.3" y="568.0" font-size="4.6" fill="#555" >100</text>
<line x1="265" y1="556.733" x2="443" y2="556.733" stroke="#dcdcdc" stroke-width="0.9" />
<text x="252.3" y="558.3" font-size="4.6" fill="#555" >200</text>
<line x1="265" y1="547.1" x2="443" y2="547.1" stroke="#dcdcdc" stroke-width="0.9" />
<text x="252.3" y="548.7" font-size="4.6" fill="#555" >300</text>
<line x1="265" y1="537.467" x2="443" y2="537.467" stroke="#dcdcdc" stroke-width="0.9" />
<text x="252.3" y="539.1" font-size="4.6" fill="#555" >400</text>
<line x1="265" y1="527.833" x2="443" y2="527.833" stroke="#dcdcdc" stroke-width="0.9" />
<text x="252.3" y="529.4" font-size="4.6" fill="#555" >500</text>
<line x1="265" y1="518.2" x2="443" y2="518.2" stroke="#dcdcdc" stroke-width="0.9" />
<text x="252.3" y="519.8" font-size="4.6" fill="#555" >600</text>
<line x1="265" y1="508.567" x2="443" y2="508.567" stroke="#dcdcdc" stroke-width="0.9" />
<text x="252.3" y="510.2" font-size="4.6" fill="#555" >700</text>
<line x1="265" y1="498.933" x2="443" y2="498.933" stroke="#dcdcdc" stroke-width="0.9" />
<text x="252.3" y="500.5" font-size="4.6" fill="#555" >800</text>
<line x1="265" y1="489.3" x2="443" y2="489.3" stroke="#dcdcdc" stroke-width="0.9" />
<text x="252.3" y="490.9" font-size="4.6" fill="#555" >900</text>
<rect x="285.3" y="533.613" width="18.4" height="42.3867" fill="#4472c4" />
<text x="287.6" y="583.4" font-size="4.8" fill="#555" >Binder</text>
<rect x="344.7" y="495.08" width="18.4" height="80.92" fill="#4472c4" />
<text x="349.6" y="583.4" font-size="4.8" fill="#555" >Pen</text>
<rect x="404.1" y="518.682" width="18.4" height="57.3183" fill="#4472c4" />
<text x="406.8" y="583.4" font-size="4.8" fill="#555" >Pencil</text>
<rect x="249" y="599" width="200" height="120" fill="#ffffff" stroke="#e6e6e6" stroke-width="1"/>
<text x="312.5" y="611.2" font-size="7.3" fill="#595959" textLength="73.0" lengthAdjust="spacingAndGlyphs" >Sum of Units by Region</text>
<line x1="268" y1="706" x2="443" y2="706" stroke="#dcdcdc" stroke-width="0.9" />
<text x="260.4" y="707.6" font-size="4.6" fill="#555" >0</text>
<line x1="268" y1="697.33" x2="443" y2="697.33" stroke="#dcdcdc" stroke-width="0.9" />
<text x="255.3" y="698.9" font-size="4.6" fill="#555" >100</text>
<line x1="268" y1="688.66" x2="443" y2="688.66" stroke="#dcdcdc" stroke-width="0.9" />
<text x="255.3" y="690.3" font-size="4.6" fill="#555" >200</text>
<line x1="268" y1="679.99" x2="443" y2="679.99" stroke="#dcdcdc" stroke-width="0.9" />
<text x="255.3" y="681.6" font-size="4.6" fill="#555" >300</text>
<line x1="268" y1="671.32" x2="443" y2="671.32" stroke="#dcdcdc" stroke-width="0.9" />
<text x="255.3" y="672.9" font-size="4.6" fill="#555" >400</text>
<line x1="268" y1="662.65" x2="443" y2="662.65" stroke="#dcdcdc" stroke-width="0.9" />
<text x="255.3" y="664.2" font-size="4.6" fill="#555" >500</text>
<line x1="268" y1="653.98" x2="443" y2="653.98" stroke="#dcdcdc" stroke-width="0.9" />
<text x="255.3" y="655.6" font-size="4.6" fill="#555" >600</text>
<line x1="268" y1="645.31" x2="443" y2="645.31" stroke="#dcdcdc" stroke-width="0.9" />
<text x="255.3" y="646.9" font-size="4.6" fill="#555" >700</text>
<line x1="268" y1="636.64" x2="443" y2="636.64" stroke="#dcdcdc" stroke-width="0.9" />
<text x="255.3" y="638.2" font-size="4.6" fill="#555" >800</text>
<line x1="268" y1="627.97" x2="443" y2="627.97" stroke="#dcdcdc" stroke-width="0.9" />
<text x="255.3" y="629.6" font-size="4.6" fill="#555" >900</text>
<line x1="268" y1="619.3" x2="443" y2="619.3" stroke="#dcdcdc" stroke-width="0.9" />
<text x="252.8" y="620.9" font-size="4.6" fill="#555" >1000</text>
<rect x="287.5" y="667.418" width="18.2" height="38.5815" fill="#4472c4" />
<text x="288.9" y="713.4" font-size="4.8" fill="#555" >Central</text>
<rect x="346" y="627.97" width="18.2" height="78.03" fill="#4472c4" />
<text x="350.3" y="713.4" font-size="4.8" fill="#555" >East</text>
<rect x="404.5" y="658.748" width="18.2" height="47.2515" fill="#4472c4" />
<text x="407.7" y="713.4" font-size="4.8" fill="#555" >North</text>
<rect x="249" y="729" width="200" height="120" fill="#ffffff" stroke="#e6e6e6" stroke-width="1"/>
<text x="332.5" y="741.2" font-size="7.3" fill="#595959" textLength="33.0" lengthAdjust="spacingAndGlyphs" >Chart Title</text>
<line x1="265" y1="810.1" x2="443" y2="810.1" stroke="#dcdcdc" stroke-width="0.9" />
<text x="254.9" y="811.7" font-size="4.6" fill="#555" >30</text>
<line x1="265" y1="801.4" x2="443" y2="801.4" stroke="#dcdcdc" stroke-width="0.9" />
<text x="254.9" y="803.0" font-size="4.6" fill="#555" >40</text>
<line x1="265" y1="792.7" x2="443" y2="792.7" stroke="#dcdcdc" stroke-width="0.9" />
<text x="254.9" y="794.3" font-size="4.6" fill="#555" >50</text>
<line x1="265" y1="784" x2="443" y2="784" stroke="#dcdcdc" stroke-width="0.9" />
<text x="254.9" y="785.6" font-size="4.6" fill="#555" >60</text>
<line x1="265" y1="775.3" x2="443" y2="775.3" stroke="#dcdcdc" stroke-width="0.9" />
<text x="254.9" y="776.9" font-size="4.6" fill="#555" >70</text>
<line x1="265" y1="766.6" x2="443" y2="766.6" stroke="#dcdcdc" stroke-width="0.9" />
<text x="254.9" y="768.2" font-size="4.6" fill="#555" >80</text>
<line x1="265" y1="757.9" x2="443" y2="757.9" stroke="#dcdcdc" stroke-width="0.9" />
<text x="254.9" y="759.5" font-size="4.6" fill="#555" >90</text>
<line x1="265" y1="749.2" x2="443" y2="749.2" stroke="#dcdcdc" stroke-width="0.9" />
<text x="252.3" y="750.8" font-size="4.6" fill="#555" >100</text>
<rect x="272" y="753.55" width="7.4" height="66.45" fill="#4472c4" />
<rect x="295" y="787.48" width="7.4" height="32.52" fill="#4472c4" />
<rect x="317" y="806.62" width="7.4" height="13.38" fill="#4472c4" />
<rect x="339.5" y="766.6" width="7.4" height="53.4" fill="#4472c4" />
<rect x="361.7" y="757.9" width="7.4" height="62.1" fill="#4472c4" />
<rect x="406.5" y="779.65" width="7.4" height="40.35" fill="#4472c4" />
<rect x="428.7" y="806.62" width="7.4" height="13.38" fill="#4472c4" />
</g>
<rect x="821.4" y="833.8" width="85" height="27" fill="#fbfbfb" rx="4" stroke="#1a6fb5" stroke-width="1.4"/>
<text x="855.6" y="851.6" font-size="13" fill="#111" textLength="17.4" lengthAdjust="spacingAndGlyphs" >OK</text>
<rect x="920.9" y="833.8" width="84" height="27" fill="#fbfbfb" rx="4" stroke="#d2d2d2" stroke-width="1"/>
<text x="944.5" y="851.6" font-size="13" fill="#111" textLength="37.5" lengthAdjust="spacingAndGlyphs" >Cancel</text>
<rect x="1008.5" y="859.5" width="2.2" height="2.2" fill="#bdbdbd" />
<rect x="1005.2" y="862.8" width="2.2" height="2.2" fill="#bdbdbd" />
<rect x="1008.5" y="862.8" width="2.2" height="2.2" fill="#bdbdbd" />
<rect x="1001.9" y="866.1" width="2.2" height="2.2" fill="#bdbdbd" />
<rect x="1005.2" y="866.1" width="2.2" height="2.2" fill="#bdbdbd" />
<rect x="1008.5" y="866.1" width="2.2" height="2.2" fill="#bdbdbd" />
</svg>
</body></html>
